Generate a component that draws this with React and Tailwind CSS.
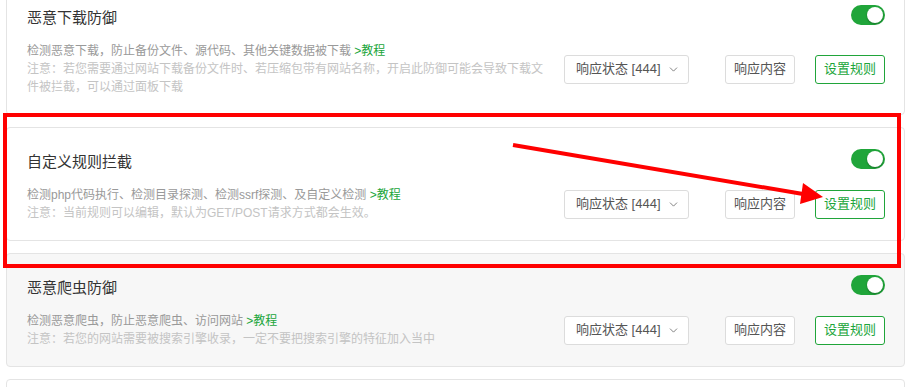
import { ChevronDown } from 'lucide-react';

const rules = [
    {
        title: '恶意下载防御',
        desc: '检测恶意下载，防止备份文件、源代码、其他关键数据被下载',
        note: '注意：若您需要通过网站下载备份文件时、若压缩包带有网站名称，开启此防御可能会导致下载文件被拦截，可以通过面板下载',
        bg: 'bg-white',
    },
    {
        title: '自定义规则拦截',
        desc: '检测php代码执行、检测目录探测、检测ssrf探测、及自定义检测',
        note: '注意：当前规则可以编辑，默认为GET/POST请求方式都会生效。',
        bg: 'bg-white',
    },
    {
        title: '恶意爬虫防御',
        desc: '检测恶意爬虫，防止恶意爬虫、访问网站',
        note: '注意：若您的网站需要被搜索引擎收录，一定不要把搜索引擎的特征加入当中',
        bg: 'bg-[#f7f7f7]',
    },
];

const Toggle = () => (
    <div className="relative w-[34px] h-[20px] rounded-full bg-[#20a53a] -mt-[3px] shrink-0">
        <div className="absolute right-[2px] top-[2px] w-[16px] h-[16px] rounded-full bg-white shadow-[0_1px_2px_rgba(0,0,0,0.3)]" />
    </div>
);

const RuleCard = ({ rule }) => {
    return (
        <div className={`border border-[#e4e4e4] rounded-[4px] pl-5 pr-[19px] pt-[24px] pb-[18px] mb-3 ${rule.bg}`}>
            {/* title + switch */}
            <div className="flex items-start justify-between">
                <div className="text-[15px] leading-[20px] text-[#333]">{rule.title}</div>
                <Toggle />
            </div>

            {/* description + actions */}
            <div className="flex items-center justify-between mt-[14px]">
                <div className="w-[527px] text-[12px] leading-[18px]">
                    <div className="text-[#999]">
                        {rule.desc} <span className="text-[#20a53a]">&gt;教程</span>
                    </div>
                    <div className="text-[#c4c4c4]">{rule.note}</div>
                </div>

                <div className="flex items-center">
                    <div className="flex items-center justify-between w-[125px] h-[29px] border border-[#dcdcdc] rounded-[3px] pl-[11px] pr-[8px] text-[13px] text-[#555] bg-white">
                        <span>响应状态 [444]</span>
                        <ChevronDown size={13} strokeWidth={1.5} color="#666" />
                    </div>
                    <button className="ml-9 w-[70px] h-[29px] border border-[#dcdcdc] rounded-[3px] text-[13px] text-[#555] bg-white">
                        响应内容
                    </button>
                    <button className="ml-5 w-[70px] h-[29px] border border-[#20a53a] rounded-[3px] text-[13px] text-[#20a53a] bg-white">
                        设置规则
                    </button>
                </div>
            </div>
        </div>
    );
};

export default function App() {
    return (
        <div
            className="relative w-[911px] h-[387px] overflow-hidden bg-white"
            style={{ fontFamily: '"Liberation Sans", "Noto Sans CJK SC", sans-serif' }}
        >
            <div className="px-[6px] -mt-[17px]">
                {rules.map((r) => (
                    <RuleCard key={r.title} rule={r} />
                ))}
                <div className="border border-[#e4e4e4] rounded-[4px] h-[60px] bg-white" />
            </div>

            {/* annotation: highlight box */}
            <div className="absolute left-[3px] top-[113px] w-[898px] h-[155px] border-4 border-[#ff0000] pointer-events-none" />

            {/* annotation: arrow */}
            <svg className="absolute left-0 top-0 pointer-events-none" width="911" height="387">
                <line x1="513" y1="145" x2="803" y2="194" stroke="#ff0000" strokeWidth="4" />
                <polygon points="823,197 803,183 800,204" fill="#ff0000" />
            </svg>
        </div>
    );
}
